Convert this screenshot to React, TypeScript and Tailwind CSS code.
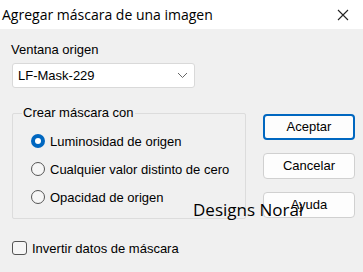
import React from "react";

const ui = { fontFamily: '"Liberation Sans", Arial, sans-serif' };

function Radio({ checked, label }: { checked?: boolean; label: string }) {
  return (
    <div className="flex items-center h-[14px]">
      {checked ? (
        <div className="w-[14px] h-[14px] rounded-full bg-[#0067c0] flex items-center justify-center">
          <div className="w-[6px] h-[6px] rounded-full bg-white" />
        </div>
      ) : (
        <div className="w-[14px] h-[14px] rounded-full border border-[#555] bg-[#f6f6f6]" />
      )}
      <span className="ml-[5px] text-[13px] text-black leading-none">{label}</span>
    </div>
  );
}

function Btn({ label, primary }: { label: string; primary?: boolean }) {
  return (
    <div
      className={
        "w-[92px] h-[26px] rounded-[4px] bg-[#fdfdfd] flex items-center justify-center text-[13px] text-black " +
        (primary ? "border-2 border-[#0067c0]" : "border border-[#d0d0d0]")
      }
    >
      {label}
    </div>
  );
}

export default function App() {
  return (
    <div className="w-[363px] h-[272px] bg-[#f0f0f0] relative overflow-hidden" style={ui}>
      <div className="h-[29px] bg-white flex items-center justify-between pl-[2px] pr-[14px]">
        <span className="text-[14px] text-black" style={{ fontFamily: '"Open Sans", sans-serif' }}>
          Agregar máscara de una imagen
        </span>
        <svg width="12" height="12" viewBox="0 0 12 12">
          <path d="M1 1L11 11M11 1L1 11" stroke="#222" strokeWidth="1.1" />
        </svg>
      </div>
      <div className="flex pl-[12px] pt-[14px]">
        <div className="flex flex-col w-[234px]">
          <span className="text-[13px] leading-none ml-[-1px] text-black">Ventana origen</span>
          <div className="mt-[7px] w-[183px] h-[25px] bg-white border border-[#d9d9d9] rounded-[3px] flex items-center justify-between pl-[5px] pr-[6px]">
            <span className="text-[13px] text-black">LF-Mask-229</span>
            <svg width="11" height="7" viewBox="0 0 11 7">
              <path d="M1 1L5.5 5.5L10 1" stroke="#666" strokeWidth="1" fill="none" />
            </svg>
          </div>
          <div className="relative mt-[25px] h-[106px] border border-[#dcdcdc] rounded-[2px]">
            <span className="absolute -top-[8px] left-[9px] px-[1px] bg-[#f0f0f0] text-[13px] leading-none text-black">
              Crear máscara con
            </span>
            <div className="flex flex-col gap-[14px] pl-[18px] pt-[20px]">
              <Radio checked label="Luminosidad de origen" />
              <Radio label="Cualquier valor distinto de cero" />
              <Radio label="Opacidad de origen" />
            </div>
          </div>
          <div className="mt-[22px] flex items-center">
            <div className="w-[15px] h-[14px] border border-[#555] rounded-[3px] bg-[#f6f6f6]" />
            <span className="ml-[5px] text-[13px] text-black leading-none">Invertir datos de máscara</span>
          </div>
        </div>
        <div className="flex flex-col gap-[13px] ml-[17px] mt-[71px]">
          <Btn primary label="Aceptar" />
          <Btn label="Cancelar" />
          <Btn label="Ayuda" />
        </div>
      </div>
      <span
        className="absolute left-[193px] top-[201px] text-[17px] text-black leading-none"
        style={{ fontFamily: '"Open Sans", sans-serif' }}
      >
        Designs Norai
      </span>
    </div>
  );
}
